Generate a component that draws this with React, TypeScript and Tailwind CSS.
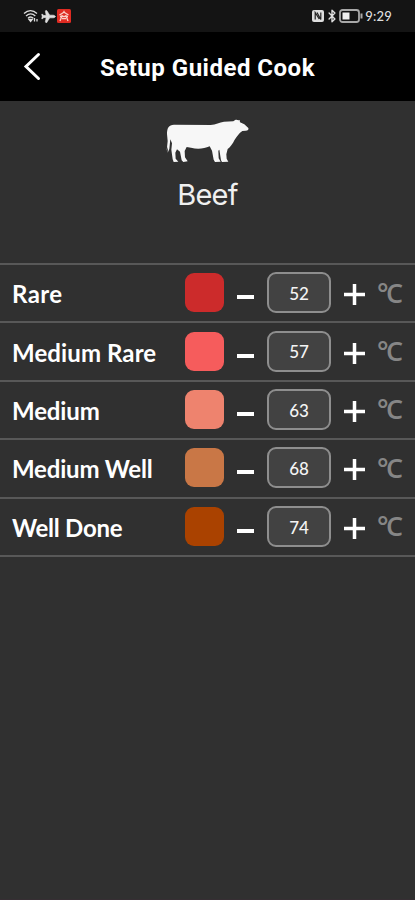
import { Bluetooth, Plane } from "lucide-react";

const levels = [
  { name: "Rare", temp: 52, swatch: "bg-[#cc2b2b]", label: "tracking-[0.4px]" },
  { name: "Medium Rare", temp: 57, swatch: "bg-[#f65c5c]", label: "tracking-[0.1px]" },
  { name: "Medium", temp: 63, swatch: "bg-[#ee836e]", label: "tracking-[-0.15px]" },
  { name: "Medium Well", temp: 68, swatch: "bg-[#c97746]", label: "tracking-[-0.2px]" },
  { name: "Well Done", temp: 74, swatch: "bg-[#aa4200]", label: "tracking-[-0.25px]" },
];

function StatusBar() {
  return (
    <div className="flex h-8 items-center justify-between bg-[#141414] px-[23px] text-[#dedede]">
      <div className="flex items-center gap-px">
        <svg width="16" height="14" viewBox="0 0 16 14" fill="none" stroke="currentColor" strokeWidth="1.3">
          <path d="M1 4.5C5 .8 10 .8 14 4.5M3 7C6 4.3 9.5 4.3 12.3 7M5 9.3C6.7 7.7 8.7 7.7 10.3 9.3" />
          <path d="M6 10.5h3.2L7.6 12.5ZM11.5 9v3.5M14 10v2.5" />
        </svg>
        <Plane className="size-[15px] rotate-45" fill="currentColor" strokeWidth={1} />
        <svg className="ml-px" width="14" height="14" viewBox="0 0 14 14">
          <rect width="14" height="14" rx="1.5" fill="#df2b22" />
          <path d="M7 1.8v2M2.5 6 7 3.3 11.5 6M3 7.5h8M5 9.7h4M5.3 6 3 12M8.7 6l2.3 6" fill="none" stroke="#fbd0c8" strokeWidth="1.3" />
        </svg>
      </div>
      <div className="flex items-center">
        <svg width="12" height="12" viewBox="0 0 12 12">
          <rect width="12" height="12" rx="2" fill="#dedede" />
          <path d="M3.2 9.5v-7l4 6.5M5 2.5 8.8 9.5v-7" fill="none" stroke="#222" strokeWidth="1.2" />
        </svg>
        <Bluetooth className="ml-[1px] size-[14px]" strokeWidth={2.4} />
        <svg width="24" height="14" viewBox="0 0 24 14">
          <rect x="1" y="1" width="19" height="12" rx="2.5" fill="#141414" stroke="#a8a8a8" strokeWidth="1.8" />
          <rect x="3.5" y="3.5" width="7" height="7" fill="#f0f0f0" />
          <path d="M22.5 4.5v5" stroke="#a8a8a8" strokeWidth="2" />
        </svg>
        <span className="ml-[2px] text-[13px] font-medium leading-none tracking-[0.2px]">9:29</span>
      </div>
    </div>
  );
}

function Cow() {
  return (
    <svg className="h-14 w-24" viewBox="0 0 288 168" fill="#f7f7f7">
      <path d="M21 66C21 48 26 39 42 38L152 39C168 37 178 32 192 29L220 28C224 23 231 22 235 25L239 24 240 31 253 37 265 48C267 53 263 56 257 56L247 57C237 64 231 73 224 83C218 96 210 105 203 111L199 127 200 140 205 149 186 150 183 145 178 113 175 116 176 139 182 149 165 150 161 143 156 116 149 103C132 110 113 113 93 107L80 105 74 117 75 136 83 148 70 150 65 145 60 119 51 112 46 122 47 140 55 149 41 150 38 142 34 113 36 94 31 82 28 111 23 122 24 104 20 116 23 87Z" />
    </svg>
  );
}

export default function App() {
  return (
    <main className="min-h-[900px] w-full border-b border-[#362e33] bg-[#303030] font-['Lato',sans-serif] text-white">
      <StatusBar />
      <header className="flex h-[69px] items-center bg-black pl-[23px]">
        <svg width="18" height="30" viewBox="0 0 18 30" fill="none" stroke="white" strokeWidth="3" strokeLinecap="round">
          <path d="M15.5 2.5 3 14.5 15.5 26.5" />
        </svg>
        <h1 className="ml-[59px] mt-[2px] whitespace-nowrap font-['Roboto',sans-serif] text-[24px] font-bold tracking-[0.5px]">
          Setup Guided Cook
        </h1>
      </header>

      <section className="flex h-[162px] flex-col items-center pt-[11px]">
        <Cow />
        <h2 className="mt-[9px] font-['Inter',sans-serif] text-[29px] font-normal leading-9 tracking-[-0.7px] text-[#f0f0f0]">
          Beef
        </h2>
      </section>

      <ul className="border-t-2 border-[#585858]">
        {levels.map((level) => (
          <li
            key={level.name}
            className="flex h-[58.4px] items-center border-b-2 border-[#585858] pl-3"
          >
            <span className={`mt-[2px] w-[173px] whitespace-nowrap text-[24px] font-bold ${level.label}`}>
              {level.name}
            </span>
            <span className={`-mt-px size-[39px] rounded-[9px] ${level.swatch}`} />
            <span className="ml-[13px] mt-[8px] h-[4px] w-[17px] bg-white" />
            <span className="-mt-px ml-[13px] flex h-[41px] w-16 items-center justify-center rounded-[9px] border-2 border-[#8e8e8e] bg-[#424242] pt-[2px] text-[17px] font-medium text-[#f4f4f4]">
              {level.temp}
            </span>
            <svg className="ml-[13px] mt-[3px]" width="21" height="21" viewBox="0 0 21 21" stroke="white" strokeWidth="3.5">
              <path d="M10.5 0v21M0 10.5h21" />
            </svg>
            <span className="-mt-[2px] ml-[12px] font-['Open_Sans',sans-serif] text-[27px] font-semibold leading-none tracking-[-2.5px] text-[#868686]">
              °C
            </span>
          </li>
        ))}
      </ul>
    </main>
  );
}
